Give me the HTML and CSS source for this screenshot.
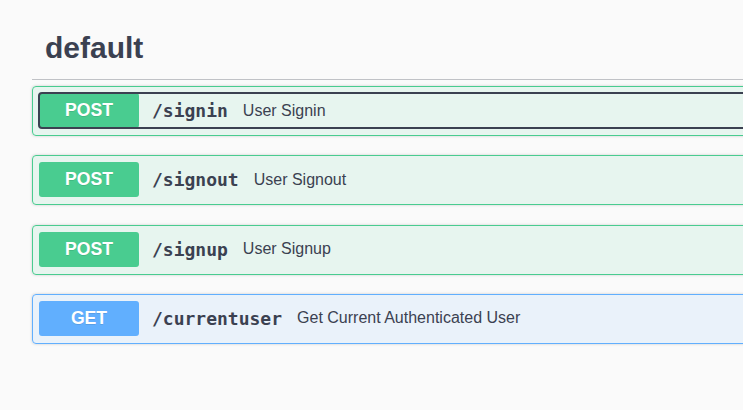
FILE: index.html
```html
<!DOCTYPE html>
<html lang="en">
<head>
<meta charset="utf-8">
<title>default</title>
<link rel="stylesheet" href="styles.css">
</head>
<body>
<div class="page">
  <h3 class="tag">default</h3>
  <div class="ops">
    <div class="opblock post">
      <div class="summary">
        <div class="control focused">
          <span class="method">POST</span>
          <span class="path">/signin</span>
          <span class="desc">User Signin</span>
        </div>
      </div>
    </div>
    <div class="opblock post">
      <div class="summary">
        <div class="control">
          <span class="method">POST</span>
          <span class="path">/signout</span>
          <span class="desc">User Signout</span>
        </div>
      </div>
    </div>
    <div class="opblock post">
      <div class="summary">
        <div class="control">
          <span class="method">POST</span>
          <span class="path">/signup</span>
          <span class="desc">User Signup</span>
        </div>
      </div>
    </div>
    <div class="opblock get">
      <div class="summary">
        <div class="control">
          <span class="method">GET</span>
          <span class="path">/currentuser</span>
          <span class="desc">Get Current Authenticated User</span>
        </div>
      </div>
    </div>
  </div>
</div>
</body>
</html>
```

FILE: styles.css
```css
html, body {
  margin: 0;
  padding: 0;
  background: #fafafa;
  overflow: hidden;
}

.page {
  width: 800px;
  padding-left: 32px;
  font-family: "Liberation Sans", Arial, sans-serif;
  color: #3b4151;
}

.tag {
  margin: 0;
  padding: 31px 0 14px 13px;
  font-size: 30px;
  line-height: 34px;
  font-weight: 700;
  color: #3b4151;
  border-bottom: 1px solid rgba(59, 65, 81, 0.3);
}

.ops {
  padding-top: 6px;
}

.opblock {
  border: 1px solid #000;
  border-radius: 4px;
  margin-bottom: 19.33px;
  box-shadow: 0 0 3px rgba(0, 0, 0, 0.19);
}

.opblock.post {
  border-color: #49cc90;
  background: rgba(73, 204, 144, 0.1);
}

.opblock.get {
  border-color: #61affe;
  background: rgba(97, 175, 254, 0.1);
}

.summary {
  display: flex;
  padding: 6px 6px 7px 6px;
}

.control {
  flex: 1;
  display: flex;
  align-items: center;
  border-radius: 3px;
}

.control.focused {
  outline: 2px solid #3b4151;
  outline-offset: -1px;
}

.method {
  flex: none;
  width: 100px;
  height: 35px;
  display: flex;
  align-items: center;
  justify-content: center;
  border-radius: 3px;
  color: #fff;
  font-size: 17.6px;
  font-weight: 700;
  text-shadow: 0 1px 0 rgba(0, 0, 0, 0.1);
}

.post .method {
  background: #49cc90;
}

.get .method {
  background: #61affe;
}

.path {
  padding: 0 15px 0 13px;
  font-family: "DejaVu Sans Mono", monospace;
  font-size: 18px;
  font-weight: 700;
  color: #3b4151;
}

.desc {
  font-size: 16px;
  color: #3b4151;
}
```
